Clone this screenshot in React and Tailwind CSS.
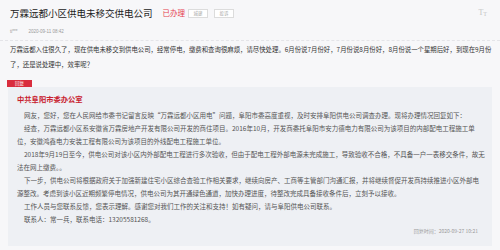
export default function App() {
  const paras = [
    "网友，您好，您在人民网给市委书记留言反映“万霖远都小区用电”问题，阜阳市委高度重视，及时安排阜阳供电公司调查办理。现将办理情况回复如下：",
    "经查，万霖远都小区系安徽省万霖房地产开发有限公司开发的商住项目。2016年10月，开发商委托阜阳市安力德电力有限公司为该项目的内部配电工程施工单位，安徽鸿鑫电力安装工程有限公司为该项目的外线配电工程施工单位。",
    "2018年9月19日至今，供电公司对该小区内外部配电工程进行多次验收，但由于配电工程外部电源未完成施工，导致验收不合格，不具备一户一表移交条件，故无法在网上缴费。。",
    "下一步，供电公司将根据政府关于加强新建住宅小区综合查验工作相关要求，继续向房产、工商等主管部门沟通汇报，并将继续督促开发商持续推进小区外部电源整改。考虑到该小区近期频繁停电情况，供电公司为其开通绿色通道，加快办理进度，待整改完成具备接收条件后，立刻予以接收。",
    "工作人员与您联系反馈，您表示理解。感谢您对我们工作的关注和支持！如有疑问，请与阜阳供电公司联系。",
    "联系人：常一兵，联系电话：13205581268。",
  ];
  return (
    <div
      lang="zh-CN"
      className="w-[500px] h-[250px] overflow-hidden bg-[#f7f7f9] font-['Noto_Sans_CJK_SC','Noto_Sans',sans-serif]"
    >
      <div className="px-[10px] pt-[7px]">
        <div className="flex items-center h-[12px]">
          <span className="text-[9.5px] leading-[12px] text-[#222]">万霖远都小区供电未移交供电公司</span>
          <span className="ml-[10px] text-[7.5px] leading-[12px] text-[#e5404e]">已办理</span>
          <span className="ml-[3px] w-[20px] h-[9px] border border-[#dcdcdc] bg-white flex items-center justify-center text-[4.5px] text-[#aaa]">城建</span>
          <span className="ml-[6px] w-[20px] h-[9px] border border-[#dcdcdc] bg-white flex items-center justify-center text-[4.5px] text-[#aaa]">投诉</span>
          <span className="ml-auto mr-[3px] flex items-end text-[#c4c4c4] font-['Liberation_Serif',serif] leading-none">
            <span className="text-[8px]">T</span>
            <span className="text-[6px]">T</span>
          </span>
        </div>
        <div className="mt-[9px] flex items-center h-[8px] text-[4.5px] leading-[8px] text-[#9a9a9a] font-['Liberation_Sans',sans-serif]">
          <span>ti***</span>
          <span className="ml-[11px]">2020-09-11 08:42</span>
        </div>
      </div>
      <div className="mt-[4px] border-b border-dashed border-[#e4e4e8]" />
      <div className="pl-[10px] pr-[8px] pt-[1px] text-[6.4px] leading-[15px] text-[#333]">
        万霖远都入住很久了，现在供电未移交到供电公司，经常停电，缴费和查询很麻烦，请尽快处理。6月份说7月份好，7月份说8月份好，8月份说一个星期后好，到现在9月份了，还是说处理中，效率呢？
      </div>
      <div className="mt-[8px] ml-[7px] w-[25px] h-[7px] bg-[#d92d3d] flex items-center justify-center text-[4.5px] leading-none text-white">
        回复
      </div>
      <div className="mx-[8px] bg-[#eef0f4] pl-[9px] pr-[7px] pt-[6px] pb-[11px]">
        <div className="text-[7.3px] leading-[12px] font-bold text-[#c8202e]">中共阜阳市委办公室</div>
        <div className="mt-[4px] text-[6.5px] leading-[13px] text-[#555]">
          {paras.map((p, i) => (
            <p key={i} className="indent-[7px]">{p}</p>
          ))}
        </div>
        <div className="mt-[1px] pr-[7px] text-right text-[5px] leading-[8px] text-[#9a9a9a]">
          回复时间：2020-09-27 10:21
        </div>
      </div>
    </div>
  );
}
